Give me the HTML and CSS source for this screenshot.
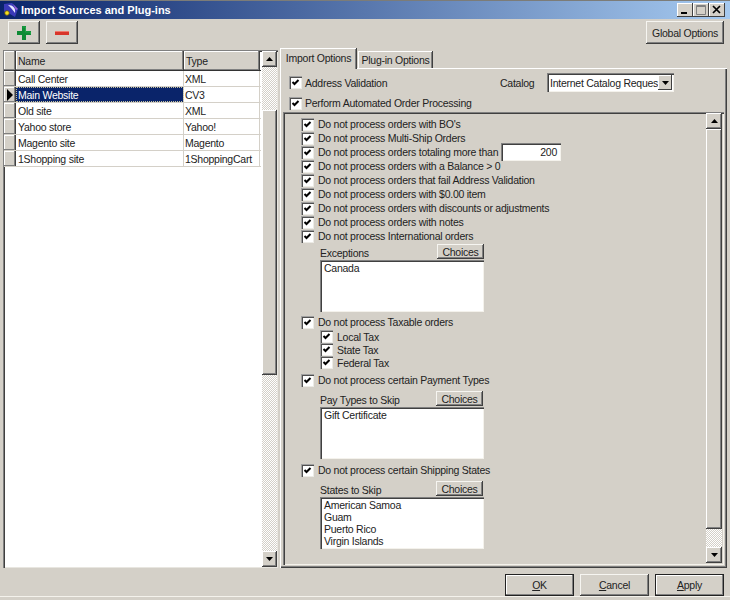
FILE: index.html
```html
<!DOCTYPE html>
<html lang="en">
<head>
<meta charset="utf-8">
<title>Import Sources and Plug-ins</title>
<link rel="stylesheet" href="styles.css">
</head>
<body>
<div class="window">
  <header class="titlebar">
    <svg class="appicon" width="16" height="16" viewBox="0 0 16 16"><path d="M1 2 L9 1 L15 7 L12 15 L7 12 L3 14 L1 9Z" fill="#3a3ab8"/><path d="M5 3 C10 3 13 6 12 11 C10 8 8 6 5 3Z" fill="#e8e8ff"/><path d="M10 2 L15 7 L13 8Z" fill="#9a60d0"/><circle cx="4" cy="11" r="2.3" fill="#f4e020" stroke="#60500a" stroke-width=".8"/></svg>
    <span class="title">Import Sources and Plug-ins</span>
    <div class="winbtns">
      <span class="winbtn"><svg width="16" height="14" viewBox="0 0 16 14"><rect x="4" y="9" width="6" height="2" fill="#000"/></svg></span>
      <span class="winbtn"><svg width="16" height="14" viewBox="0 0 16 14"><path d="M3.5 2.5h9v9h-9z M3.5 3.5h9" fill="none" stroke="#808080"/></svg></span>
      <span class="winbtn"><svg width="16" height="14" viewBox="0 0 16 14"><path d="M4 3l7 7M11 3l-7 7" stroke="#000" stroke-width="1.7" fill="none"/></svg></span>
    </div>
  </header>

  <div class="toolbar">
    <button class="btn toolbtn"><svg width="18" height="18" viewBox="0 0 18 18"><path d="M7 2h4v5h5v4h-5v5H7v-5H2V7h5z" fill="#0f8a35"/><path d="M7.5 3h3v5h5v2" fill="none" stroke="#27b050" stroke-width=".7"/></svg></button>
    <button class="btn toolbtn"><svg width="18" height="18" viewBox="0 0 18 18"><rect x="2" y="7" width="14" height="4" fill="#d8352a"/><rect x="2" y="7" width="14" height="1" fill="#ef7a6e"/></svg></button>
    <button class="btn globalbtn">Global Options</button>
  </div>

  <div class="main">
    <section class="gridbox">
      <div class="grid">
        <div class="ghead">
          <div class="gcell gcorner"></div>
          <div class="gcell gname">Name</div>
          <div class="gcell gtype">Type</div>
        </div>
        <div class="grow"><div class="gind"></div><div class="gc gname">Call Center</div><div class="gc gtype">XML</div></div>
        <div class="grow"><div class="gind"><svg width="6" height="12" viewBox="0 0 6 12"><path d="M0 0l6 6-6 6z" fill="#000"/></svg></div><div class="gc gname gsel">Main Website</div><div class="gc gtype">CV3</div></div>
        <div class="grow"><div class="gind"></div><div class="gc gname">Old site</div><div class="gc gtype">XML</div></div>
        <div class="grow"><div class="gind"></div><div class="gc gname">Yahoo store</div><div class="gc gtype">Yahoo!</div></div>
        <div class="grow"><div class="gind"></div><div class="gc gname">Magento site</div><div class="gc gtype">Magento</div></div>
        <div class="grow"><div class="gind"></div><div class="gc gname">1Shopping site</div><div class="gc gtype">1ShoppingCart</div></div>
      </div>
      <div class="sbar sbar-grid">
        <span class="sbtn"><svg width="7" height="4" viewBox="0 0 7 4"><path d="M3.5 0L7 4H0z"/></svg></span>
        <div class="strack strack-a"></div>
        <div class="sthumb sthumb-a"></div>
        <div class="strack"></div>
        <span class="sbtn"><svg width="7" height="4" viewBox="0 0 7 4"><path d="M0 0h7L3.5 4z"/></svg></span>
      </div>
    </section>

    <section class="tabs">
      <div class="tabstrip">
        <span class="tab tab-on">Import Options</span>
        <span class="tab">Plug-in Options</span>
      </div>
      <div class="tabpanel">
        <div class="toprow">
          <label class="opt opt-top opt-addr"><span class="cb"><svg width="9" height="9" viewBox="0 0 9 9"><path d="M1.5 4l2 2 4-4" class="tick"/></svg></span>Address Validation</label>
          <span class="catlabel">Catalog</span>
          <div class="select"><span class="selval">Internet Catalog Reques</span><span class="selbtn"><svg width="7" height="4" viewBox="0 0 7 4"><path d="M0 0h7L3.5 4z"/></svg></span></div>
        </div>
        <label class="opt opt-top opt-perform"><span class="cb"><svg width="9" height="9" viewBox="0 0 9 9"><path d="M1.5 4l2 2 4-4" class="tick"/></svg></span>Perform Automated Order Processing</label>

        <div class="inner">
          <div class="form">
            <label class="opt"><span class="cb"><svg width="9" height="9" viewBox="0 0 9 9"><path d="M1.5 4l2 2 4-4" class="tick"/></svg></span>Do not process orders with BO's</label>
            <label class="opt"><span class="cb"><svg width="9" height="9" viewBox="0 0 9 9"><path d="M1.5 4l2 2 4-4" class="tick"/></svg></span>Do not process Multi-Ship Orders</label>
            <label class="opt"><span class="cb"><svg width="9" height="9" viewBox="0 0 9 9"><path d="M1.5 4l2 2 4-4" class="tick"/></svg></span><span class="totaling">Do not process orders totaling more than</span><span class="numinput">200</span></label>
            <label class="opt"><span class="cb"><svg width="9" height="9" viewBox="0 0 9 9"><path d="M1.5 4l2 2 4-4" class="tick"/></svg></span>Do not process orders with a Balance &gt; 0</label>
            <label class="opt"><span class="cb"><svg width="9" height="9" viewBox="0 0 9 9"><path d="M1.5 4l2 2 4-4" class="tick"/></svg></span>Do not process orders that fail Address Validation</label>
            <label class="opt"><span class="cb"><svg width="9" height="9" viewBox="0 0 9 9"><path d="M1.5 4l2 2 4-4" class="tick"/></svg></span>Do not process orders with $0.00 item</label>
            <label class="opt"><span class="cb"><svg width="9" height="9" viewBox="0 0 9 9"><path d="M1.5 4l2 2 4-4" class="tick"/></svg></span>Do not process orders with discounts or adjustments</label>
            <label class="opt"><span class="cb"><svg width="9" height="9" viewBox="0 0 9 9"><path d="M1.5 4l2 2 4-4" class="tick"/></svg></span>Do not process orders with notes</label>
            <label class="opt"><span class="cb"><svg width="9" height="9" viewBox="0 0 9 9"><path d="M1.5 4l2 2 4-4" class="tick"/></svg></span>Do not process International orders</label>

            <div class="sub sub-first">
              <div class="subhead"><span>Exceptions</span><button class="btn choices choices-wide">Choices</button></div>
              <div class="listbox">Canada</div>
            </div>

            <label class="opt opt-gap"><span class="cb"><svg width="9" height="9" viewBox="0 0 9 9"><path d="M1.5 4l2 2 4-4" class="tick"/></svg></span>Do not process Taxable orders</label>
            <div class="taxes">
              <label class="opt opt-tax"><span class="cb"><svg width="9" height="9" viewBox="0 0 9 9"><path d="M1.5 4l2 2 4-4" class="tick"/></svg></span>Local Tax</label>
              <label class="opt opt-tax"><span class="cb"><svg width="9" height="9" viewBox="0 0 9 9"><path d="M1.5 4l2 2 4-4" class="tick"/></svg></span>State Tax</label>
              <label class="opt opt-tax"><span class="cb"><svg width="9" height="9" viewBox="0 0 9 9"><path d="M1.5 4l2 2 4-4" class="tick"/></svg></span>Federal Tax</label>
            </div>

            <label class="opt opt-gap2"><span class="cb"><svg width="9" height="9" viewBox="0 0 9 9"><path d="M1.5 4l2 2 4-4" class="tick"/></svg></span>Do not process certain Payment Types</label>
            <div class="sub">
              <div class="subhead"><span>Pay Types to Skip</span><button class="btn choices">Choices</button></div>
              <div class="listbox">Gift Certificate</div>
            </div>

            <label class="opt opt-gap2"><span class="cb"><svg width="9" height="9" viewBox="0 0 9 9"><path d="M1.5 4l2 2 4-4" class="tick"/></svg></span>Do not process certain Shipping States</label>
            <div class="sub">
              <div class="subhead"><span>States to Skip</span><button class="btn choices">Choices</button></div>
              <div class="listbox">American Samoa<br>Guam<br>Puerto Rico<br>Virgin Islands</div>
            </div>
          </div>
          <div class="sbar sbar-inner">
            <span class="sbtn"><svg width="7" height="4" viewBox="0 0 7 4"><path d="M3.5 0L7 4H0z"/></svg></span>
            <div class="sthumb"></div>
            <div class="strack strack-b"></div>
            <span class="sbtn"><svg width="7" height="4" viewBox="0 0 7 4"><path d="M0 0h7L3.5 4z"/></svg></span>
          </div>
        </div>
      </div>
    </section>
  </div>

  <footer class="footer">
    <button class="btn dlgbtn dlgbtn-def"><u>O</u>K</button>
    <button class="btn dlgbtn"><u>C</u>ancel</button>
    <button class="btn dlgbtn dlgbtn-def"><u>A</u>pply</button>
  </footer>
</div>
</body>
</html>
```

FILE: styles.css
```css
* { box-sizing: border-box; }
html, body { margin: 0; padding: 0; }
body {
  width: 730px; height: 600px; overflow: hidden;
  background: #d4d0c8; color: #222;
  font: 10.5px/14px "Liberation Sans", Arial, sans-serif;
  letter-spacing: -0.25px;
}
.window { width: 730px; height: 600px; display: flex; flex-direction: column; border-bottom: 3px solid #d4d0c8; box-shadow: inset 0 -4px 0 -3px #f4f2ec; }

.titlebar {
  height: 19px; flex: none; display: flex; align-items: center;
  border-top: 1px solid #7c7c78;
  background: linear-gradient(90deg, #0a246a, #a6caf0);
  padding: 0 5px 0 3px;
}
.appicon { flex: none; margin-right: 2px; }
.title { color: #fff; font-weight: bold; font-size: 11px; letter-spacing: 0; flex: 1; }
.winbtns { display: flex; }
.winbtn {
  width: 16px; height: 14px; background: #d4d0c8; display: block;
  box-shadow: inset -1px -1px 0 #404040, inset 1px 1px 0 #fff;
}
.winbtn svg { display: block; }

.btn {
  font: inherit; letter-spacing: inherit; color: #222; background: #d4d0c8; padding: 0; margin: 0;
  border: 0; display: flex; align-items: center; justify-content: center;
  box-shadow: inset -1px -1px 0 #404040, inset 1px 1px 0 #f6f5f1, inset -2px -2px 0 #808080;
}
.toolbar { height: 29px; flex: none; display: flex; padding: 2px 6px 0 8px; gap: 6px; }
.toolbtn { width: 32px; height: 23px; }
.globalbtn { width: 78px; height: 23px; margin-left: auto; }

.main { height: 520px; flex: none; display: flex; }

.gridbox {
  width: 275px; height: 518px; margin: 2px 0 0 3px; display: flex; flex: none;
  background: #fff;
  box-shadow: inset 1px 1px 0 #808080, inset 2px 2px 0 #404040, inset -1px -1px 0 #e8e6e0;
  padding: 1px;
}
.grid { flex: 1; min-width: 0; padding-right: 1px; }
.ghead { display: flex; height: 20px; border-bottom: 1px solid #333; }
.gcell { background: #d4d0c8; padding: 3px 0 0 2px; box-shadow: inset -1px -1px 0 #808080, inset 1px 1px 0 #fff; border-right: 1px solid #404040; }
.gcorner { width: 12px; flex: none; }
.gname { width: 168px; flex: none; }
.gtype { width: 76px; flex: none; }
.grow { display: flex; height: 16px; border-bottom: 1px solid #d4d0c8; }
.gind { width: 12px; flex: none; background: #d4d0c8; display: flex; align-items: center; justify-content: center; box-shadow: inset -1px -1px 0 #808080, inset 1px 1px 0 #fff; border-right: 1px solid #404040; }
.gc { padding: 1px 0 0 2px; border-right: 1px solid #d4d0c8; line-height: 14px; white-space: nowrap; overflow: hidden; }
.gtype.gc { padding-left: 1px; }
.gsel { background: #0a246a; color: #fff; outline: 1px dotted #c8c4a0; outline-offset: -1px; }

.sbar { width: 16px; flex: none; display: flex; flex-direction: column; }
.sbar-grid { width: 15px; }
.sbtn {
  height: 16px; flex: none; background: #d4d0c8; display: flex; align-items: center; justify-content: center;
  box-shadow: inset -1px -1px 0 #404040, inset 1px 1px 0 #fff, inset -2px -2px 0 #808080;
}
.sbtn path { fill: #000; }
.sthumb { flex: 1; background: #d4d0c8; box-shadow: inset -1px -1px 0 #404040, inset 1px 1px 0 #fff, inset -2px -2px 0 #808080; }
.sthumb-a { flex: none; height: 265px; }
.strack { flex: 1; background: repeating-conic-gradient(#fff 0 25%, #d4d0c8 0 50%) 0 0 / 2px 2px; }
.strack-a { flex: none; height: 43px; }
.strack-b { flex: none; height: 18px; }

.tabs { width: 447px; margin-left: 2px; flex: none; display: flex; flex-direction: column; }
.tabstrip { height: 20px; flex: none; display: flex; align-items: flex-end; position: relative; z-index: 1; }
.tab {
  width: 75px; height: 17px; text-align: center; padding-top: 2px; background: #d4d0c8; white-space: nowrap;
  box-shadow: inset -1px 0 0 #404040, inset 1px 1px 0 #fff, inset -2px 0 0 #808080;
  margin-left: 1px;
}
.tab-on { width: 77px; height: 21px; margin: 0 0 -1px 0; padding-top: 3px; }
.tabpanel {
  height: 500px; padding: 5px 3px 3px 3px;
  box-shadow: inset 1px 1px 0 #fff, inset -1px -1px 0 #404040, inset -2px -2px 0 #808080;
}
.toprow { display: flex; align-items: center; height: 19px; }
.opt { display: flex; align-items: center; height: 14px; white-space: nowrap; }
.opt-top { padding-left: 6px; }
.opt-top .cb { margin-right: 3px; }
.opt-addr { width: 217px; flex: none; }
.opt-perform { margin-top: 4px; }
.catlabel { width: 47px; flex: none; }
.select {
  width: 127px; height: 19px; flex: none; background: #fff; display: flex; align-items: center; padding: 2px 2px 2px 3px;
  box-shadow: inset 1px 1px 0 #808080, inset 2px 2px 0 #404040, inset -1px -1px 0 #f4f2ec;
}
.selval { flex: 1; min-width: 0; white-space: nowrap; }
.selbtn { width: 14px; height: 15px; flex: none; background: #d4d0c8; display: flex; align-items: center; justify-content: center; box-shadow: inset -1px -1px 0 #404040, inset 1px 1px 0 #fff; }
.selbtn path { fill: #000; }

.cb {
  width: 13px; height: 13px; flex: none; background: #fff; margin-right: 4px;
  display: flex; align-items: center; justify-content: center;
  box-shadow: inset 1px 1px 0 #a0a0a0, inset 2px 2px 0 #505050, inset -1px -1px 0 #ecebe6;
}
.tick { fill: none; stroke: #000; stroke-width: 2; }

.inner {
  margin-top: 2px; height: 453px; display: flex; padding: 2px;
  box-shadow: inset 1px 1px 0 #808080, inset 2px 2px 0 #404040, inset -1px -1px 0 #f4f2ec;
}
.form { flex: 1; padding: 3px 0 0 16px; min-width: 0; }
.totaling { width: 183px; flex: none; }
.numinput {
  width: 60px; height: 18px; margin: -2px 0; flex: none; background: #fff; text-align: right; padding: 2px 4px 0 0;
  box-shadow: inset 1px 1px 0 #808080, inset 2px 2px 0 #404040, inset -1px -1px 0 #f4f2ec;
}
.sub { width: 164px; margin-left: 19px; margin-top: 4px; }
.sub-first { margin-top: 1px; }
.subhead { height: 16px; display: flex; justify-content: space-between; align-items: flex-end; }
.subhead span { line-height: 13px; }
.choices { width: 47px; height: 15px; margin: 0 1px 1px 0; }
.choices-wide { margin-right: 0; }
.listbox {
  height: 52px; background: #fff; padding: 2px 0 0 4px; line-height: 12px;
  box-shadow: inset 1px 1px 0 #808080, inset 2px 2px 0 #404040, inset -1px -1px 0 #f4f2ec;
}
.opt-gap { margin-top: 3px; }
.opt-gap2 { margin-top: 4px; }
.taxes { padding: 1px 0 0 19px; }
.opt-tax { height: 13px; }
.opt-tax .cb { margin-right: 4px; }

.sbar-inner { margin-top: -1px; height: 450px; }

.footer { flex: 1; display: flex; justify-content: flex-end; gap: 6px; padding: 6px 6px 0 0; }
.dlgbtn { width: 69px; height: 22px; }
.dlgbtn u { text-underline-offset: 1px; }
.dlgbtn-def { box-shadow: inset 0 0 0 1px #222, inset -2px -2px 0 #808080, inset 2px 2px 0 #fff; }
```
